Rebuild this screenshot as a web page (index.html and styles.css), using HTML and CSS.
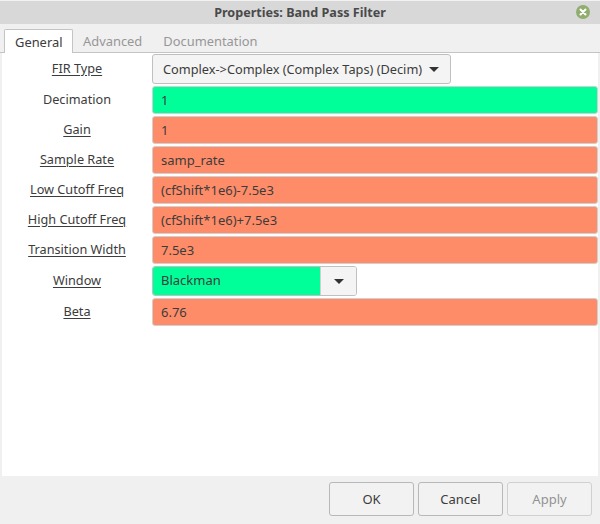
FILE: index.html
```html
<!DOCTYPE html>
<html lang="en">
<head>
<meta charset="utf-8">
<title>Properties: Band Pass Filter</title>
<link rel="stylesheet" href="styles.css">
</head>
<body>
<div class="dialog">
  <header class="titlebar">
    <span class="title">Properties: Band Pass Filter</span>
    <svg class="close" width="14" height="14" viewBox="0 0 14 14"><circle cx="7" cy="7" r="7" fill="#8fae6e"/><path d="M4.5 4.5l5 5M9.5 4.5l-5 5" stroke="#fff" stroke-width="2" stroke-linecap="round"/></svg>
  </header>
  <nav class="tabs">
    <span class="tab active">General</span>
    <span class="tab">Advanced</span>
    <span class="tab">Documentation</span>
  </nav>
  <main class="page">
    <div class="row r-combo"><span class="label ul">FIR Type</span>
      <div class="combo"><span>Complex-&gt;Complex (Complex Taps) (Decim)</span><i class="arrow"></i></div></div>
    <div class="row"><span class="label">Decimation</span><div class="field green">1</div></div>
    <div class="row"><span class="label ul">Gain</span><div class="field orange">1</div></div>
    <div class="row"><span class="label ul">Sample Rate</span><div class="field orange">samp_rate</div></div>
    <div class="row"><span class="label ul">Low Cutoff Freq</span><div class="field orange">(cfShift*1e6)-7.5e3</div></div>
    <div class="row"><span class="label ul">High Cutoff Freq</span><div class="field orange">(cfShift*1e6)+7.5e3</div></div>
    <div class="row"><span class="label ul">Transition Width</span><div class="field orange">7.5e3</div></div>
    <div class="row r-combo"><span class="label ul">Window</span>
      <div class="entrycombo"><div class="entry green">Blackman</div><div class="dropbtn"><i class="arrow"></i></div></div></div>
    <div class="row"><span class="label ul">Beta</span><div class="field orange">6.76</div></div>
  </main>
  <footer class="actions">
    <span class="btn">OK</span>
    <span class="btn">Cancel</span>
    <span class="btn disabled">Apply</span>
  </footer>
</div>
</body>
</html>
```
FILE: styles.css
```css
* { box-sizing: border-box; }
html, body { margin: 0; padding: 0; }
body {
  width: 600px; height: 524px; overflow: hidden;
  font-family: "Noto Sans", "Open Sans", sans-serif;
  font-size: 12.5px; color: #3c3c3c; background: #f0f0f0;
}
.dialog { display: flex; flex-direction: column; height: 524px; }
.titlebar {
  height: 24px; background: #d8d8d8; border-top: 1px solid #f2f2f2;
  display: flex; align-items: center; justify-content: center; position: relative;
}
.title { font-weight: 700; color: #4a4a4a; font-size: 12.6px; }
.close { position: absolute; right: 10px; top: 4px; }
.tabs {
  height: 29px; padding: 5px 0 0 4px; display: flex; background: #f0f0f0;
  border-bottom: 1px solid #c4c4c4;
}
.tab { height: 24px; padding: 0 11px 0 10px; line-height: 25px; color: #979797; font-size: 12.9px; }
.tab.active {
  height: 24px; width: 69px; color: #3c3c3c; background: #fff; padding-left: 10px;
  border: 1px solid #c4c4c4; border-bottom: 0; border-radius: 2px 2px 0 0;
}
.page {
  height: 423px; margin: 0 2px; background: #fff; padding-top: 1px;
  display: flex; flex-direction: column; gap: 2px;
}
.row { display: flex; height: 28px; align-items: stretch; }
.row.r-combo { height: 30px; }
.label { width: 150px; align-self: center; text-align: center; flex: none; color: #3c3c3c; font-size: 12.7px; line-height: 16px; padding-bottom: 2px; }
.label.ul { text-decoration: underline; text-underline-offset: 2px; }
.field, .entry {
  flex: 1; display: flex; align-items: center; padding-left: 8px; font-size: 13px;
  border-radius: 3px;
}
.field { border: 1px solid #cfcfcf; }
.green { background: #00ff99; border-color: #d0d0d0; }
.orange { background: #ff8c69; border-color: #d0d0d0; }
.combo {
  width: 299px; border: 1px solid #c0c0c0; border-radius: 3px; background: #f4f4f4; font-size: 12.75px;
  display: flex; align-items: center; justify-content: space-between; padding: 0 11px 0 10px;
}
.arrow { width: 0; height: 0; border-left: 5px solid transparent; border-right: 5px solid transparent; border-top: 5px solid #333; display: block; }
.entrycombo {
  width: 205px; display: flex; border: 1px solid #c0c0c0; border-radius: 3px; overflow: hidden;
}
.entry { width: 167px; flex: none; border-radius: 0; padding-left: 8px; padding-bottom: 2px; }
.dropbtn {
  flex: 1; background: #f4f4f4; border-left: 1px solid #d0d0d0; padding-left: 1px;
  display: flex; align-items: center; justify-content: center;
}
.actions {
  height: 48px; display: flex; justify-content: flex-end; gap: 4px; padding: 6px 8px 8px 0; background: #f0f0f0;
}
.btn {
  width: 85px; height: 34px; border: 1px solid #b8b8b8; border-radius: 3px; background: #f2f2f2; font-size: 13px;
  display: flex; align-items: center; justify-content: center; color: #3c3c3c;
}
.btn.disabled { color: #929292; border-color: #d0d0d0; }
```
